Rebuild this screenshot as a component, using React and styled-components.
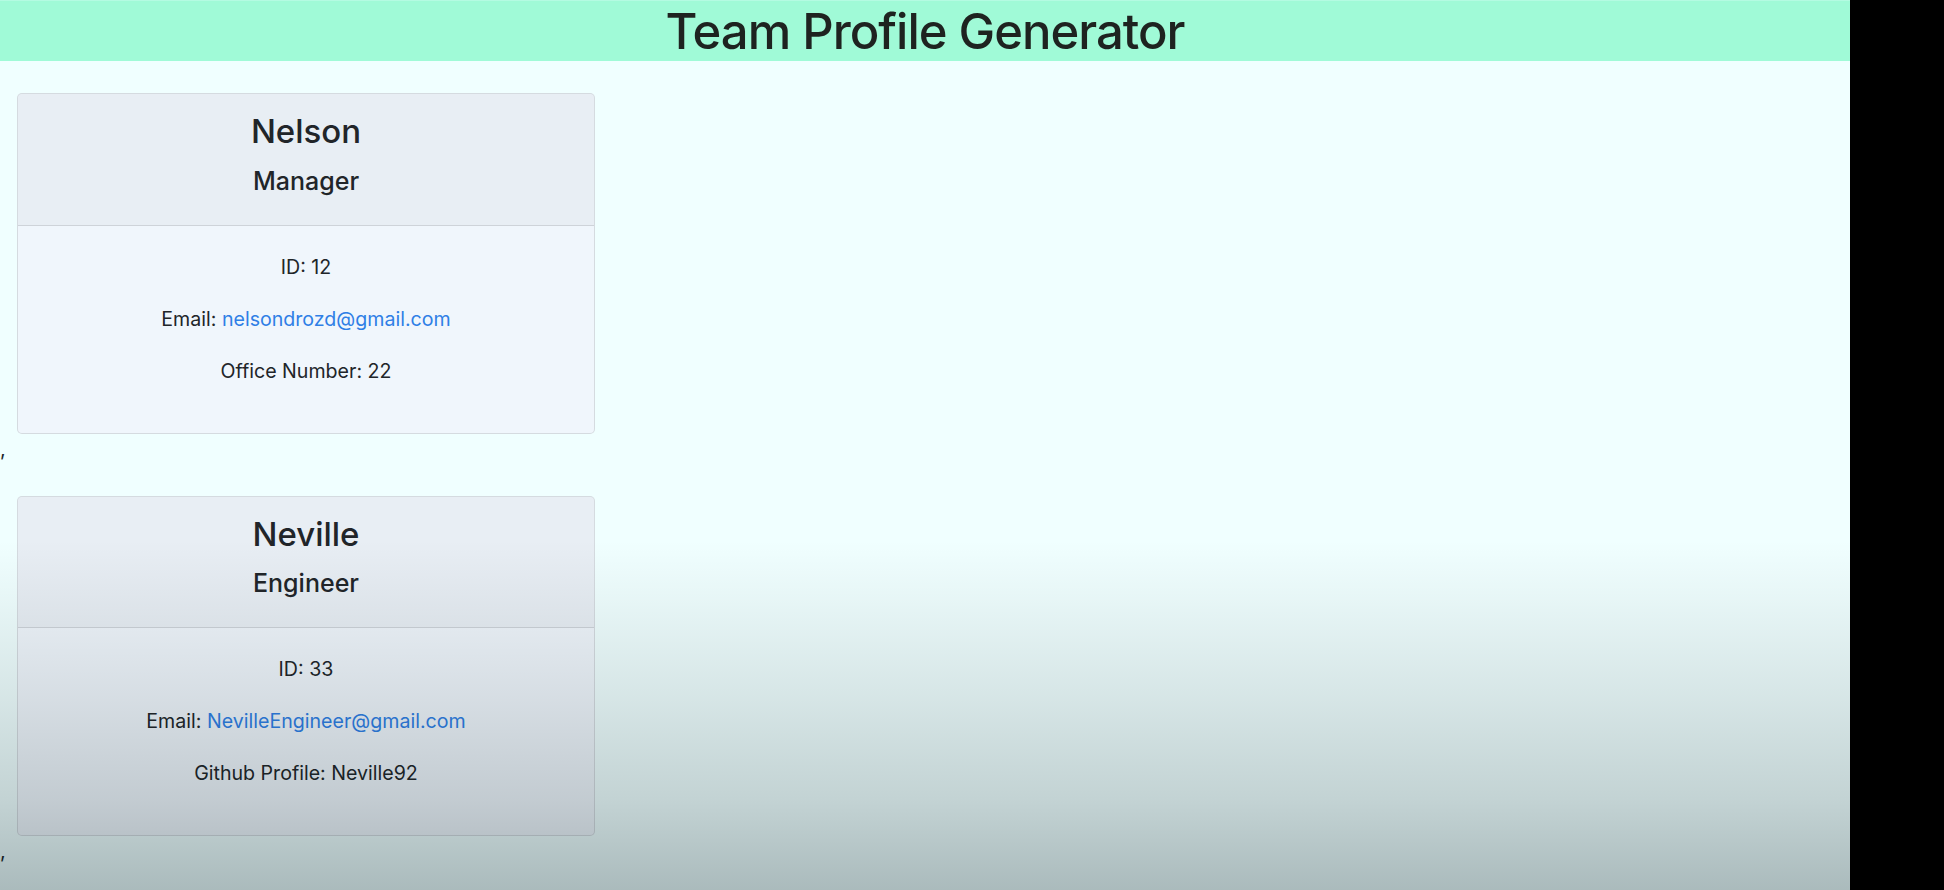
import React from 'react';
import styled, { createGlobalStyle } from 'styled-components';

const GlobalStyle = createGlobalStyle`
    html, body {
        margin: 0;
        padding: 0;
        background: #000;
        font-family: Inter, "Liberation Sans", Arial, sans-serif;
        color: #212529;
    }
`;

const Page = styled.div`
    display: flex;
    height: 100vh;
    overflow: hidden;
`;

const Main = styled.main`
    position: relative;
    width: 1850px;
    flex: none;
    background: #f0ffff;
`;

const Letterbox = styled.div`
    flex: 1;
    background: #000;
`;

const TitleBar = styled.header`
    height: 61px;
    background: #a0fad7;
    border-top: 1px solid #b4fbe2;
    box-sizing: border-box;
    display: flex;
    align-items: center;
    justify-content: center;
`;

const Title = styled.h1`
    margin: 0;
    font-size: 49px;
    font-weight: 500;
    letter-spacing: -1px;
    color: #1e2320;
`;

const CardList = styled.section`
    padding-left: 17px;
`;

const Card = styled.article`
    width: 578px;
    margin-top: 32px;
    background: #f0f6fc;
    border: 1px solid rgba(0, 0, 0, 0.11);
    border-radius: 5px;
    box-sizing: border-box;
    overflow: hidden;
    text-align: center;
`;

const CardHeader = styled.div`
    padding: 18px 25px 18px;
    background: rgba(0, 0, 0, 0.03);
    border-bottom: 1px solid rgba(0, 0, 0, 0.11);
`;

const Name = styled.h2`
    margin: 0 0 14px;
    font-size: 33px;
    line-height: 1.2;
    font-weight: 500;
`;

const Role = styled.h3`
    margin: 0 0 11px;
    font-size: 25px;
    line-height: 1.2;
    font-weight: 500;
`;

const CardBody = styled.div`
    padding: 26px 25px 25px;
`;

const Detail = styled.p`
    margin: 0 0 22px;
    font-size: 19.6px;
    line-height: 30px;
`;

const Mail = styled.a`
    color: #2f7fe6;
    text-decoration: none;
`;

const Separator = styled.div`
    margin-left: -17px;
    font-size: 20px;
    line-height: 30px;
    height: 30px;
`;

const Vignette = styled.div`
    position: absolute;
    inset: 0;
    pointer-events: none;
    background: linear-gradient(
        to bottom,
        rgba(0, 20, 25, 0) 0px,
        rgba(0, 20, 25, 0) 540px,
        rgba(0, 20, 25, 0.04) 600px,
        rgba(0, 20, 25, 0.11) 700px,
        rgba(0, 20, 25, 0.19) 800px,
        rgba(0, 20, 25, 0.29) 890px
    );
`;

const team = [
    { name: 'Nelson', role: 'Manager', id: 12, email: 'nelsondrozd@gmail.com', extra: 'Office Number: 22' },
    { name: 'Neville', role: 'Engineer', id: 33, email: 'NevilleEngineer@gmail.com', extra: 'Github Profile: Neville92' },
];

const App = () => {
    return (
        <Page>
            <GlobalStyle />
            <Main>
                <TitleBar>
                    <Title>Team Profile Generator</Title>
                </TitleBar>
                <CardList>
                    {team.map((member) => (
                        <React.Fragment key={member.id}>
                            <Card>
                                <CardHeader>
                                    <Name>{member.name}</Name>
                                    <Role>{member.role}</Role>
                                </CardHeader>
                                <CardBody>
                                    <Detail>ID: {member.id}</Detail>
                                    <Detail>
                                        Email: <Mail href={`mailto:${member.email}`}>{member.email}</Mail>
                                    </Detail>
                                    <Detail>{member.extra}</Detail>
                                </CardBody>
                            </Card>
                            <Separator>,</Separator>
                        </React.Fragment>
                    ))}
                </CardList>
                <Vignette />
            </Main>
            <Letterbox />
        </Page>
    );
};

export default App;
